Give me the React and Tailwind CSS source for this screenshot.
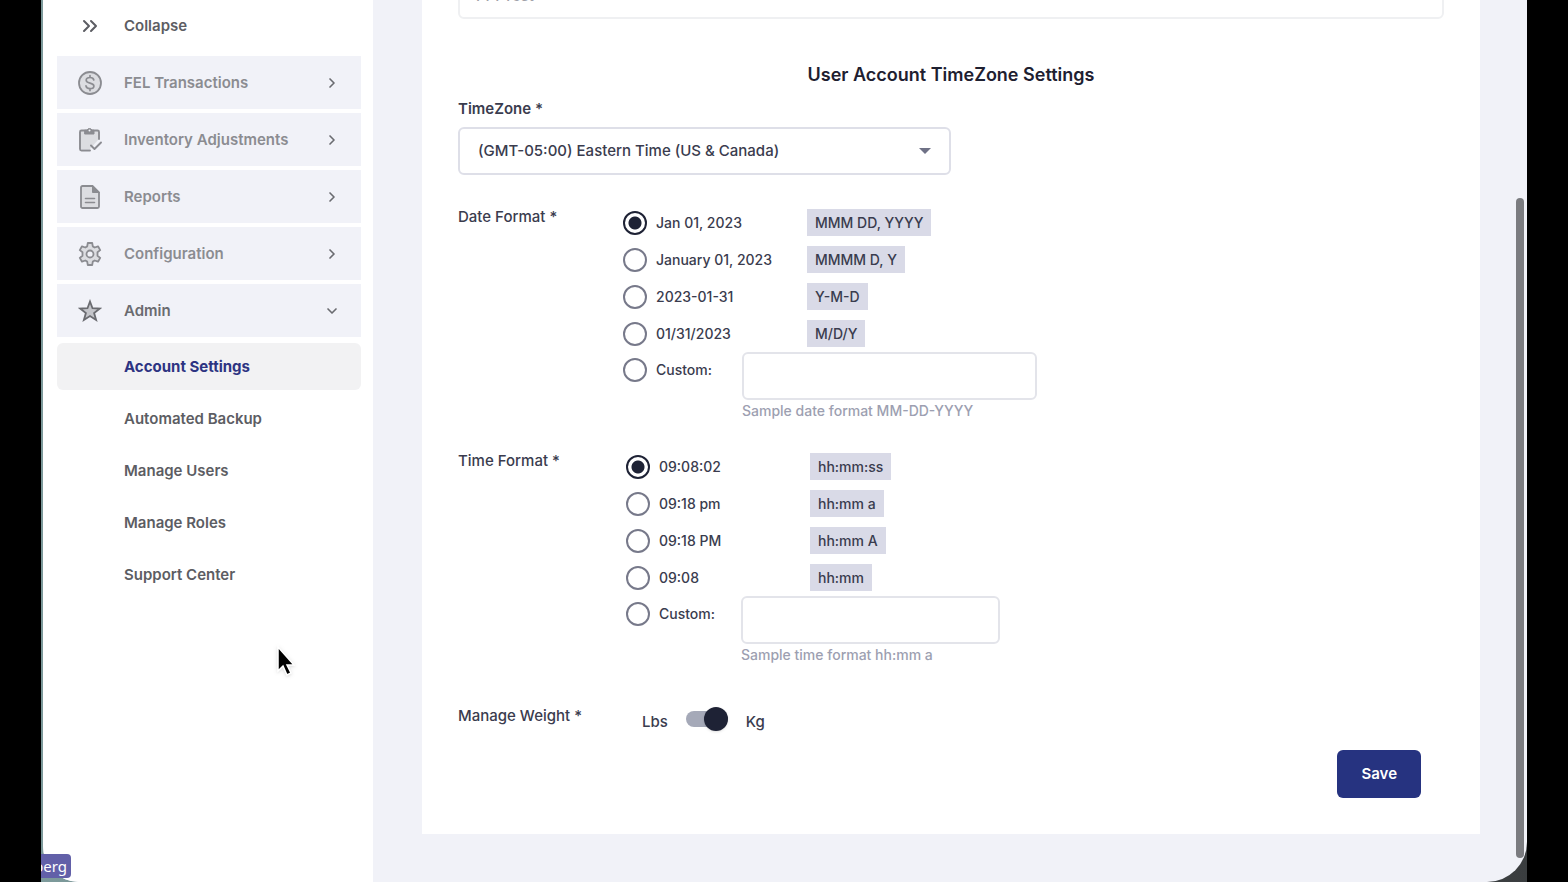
import React from "react";
import { ChevronDown, ChevronRight, ChevronsRight } from "lucide-react";

function DollarIcon() {
  return (
    <svg viewBox="0 0 24 24" className="size-6" fill="none" stroke="currentColor" strokeWidth="1.8" strokeLinecap="round">
      <circle cx="12" cy="12" r="11" fill="#dcdde1" />
      <path d="M15.8 9c-.3-1.6-1.800-2.500-3.800-2.500-2.200 0-3.800 1.100-3.800 2.700 0 3.900 7.700 1.800 7.700 5.700 0 1.700-1.700 2.700-3.900 2.700s-3.800-1-4-2.700M12 4.500v2M12 17.600v2" strokeWidth="1.7" />
    </svg>
  );
}

function ClipboardIcon() {
  return (
    <svg viewBox="0 0 24 24" className="size-6" fill="none" stroke="currentColor" strokeWidth="1.9" strokeLinecap="round" strokeLinejoin="round">
      <path d="M3 3h17v9l-8 9H3z" fill="#dcdde1" stroke="none" />
      <path d="M12 22.500H3.500A1.500 1.500 0 0 1 2 21V4a1.500 1.500 0 0 1 1.500-1.500h16A1.500 1.500 0 0 1 21 4v7" />
      <path d="M7 2.200h2.200a2.400 2.400 0 0 1 4.600 0H16V6H7z" fill="currentColor" strokeWidth="1" />
      <circle cx="11.500" cy="2.600" r="1" fill="#f1f2f8" stroke="none" />
      <path d="m13 17.500 3.500 3.500 6.500-6.500" />
    </svg>
  );
}

function ReportIcon() {
  return (
    <svg viewBox="0 0 24 24" className="size-6" fill="none" stroke="currentColor" strokeWidth="1.8" strokeLinecap="round" strokeLinejoin="round">
      <path d="M4.500 1h10L21 7.500v14a1.500 1.500 0 0 1-1.500 1.500h-15A1.500 1.500 0 0 1 3 21.500v-19A1.500 1.500 0 0 1 4.500 1z" fill="#dcdde1" />
      <path d="M14.500 1v6.500H21z" fill="currentColor" strokeWidth="1" />
      <path d="M7.500 13.500h9M7.500 17.500h9" strokeWidth="1.600" />
    </svg>
  );
}

function GearIcon() {
  return (
    <svg viewBox="0 0 24 24" className="size-6" fill="none" stroke="currentColor" strokeWidth="1.8" strokeLinejoin="round">
      <path
        d="M9.800 1h4.400l.6 3.400 1.900 1.100 3.300-1.200 2.200 3.800-2.700 2.200v3.400l2.700 2.200-2.200 3.800-3.300-1.200-1.900 1.100-.6 3.400H9.800l-.6-3.400-1.900-1.100L4 19.700l-2.200-3.800 2.700-2.200v-3.400L1.800 8.100 4 4.300l3.300 1.200 1.900-1.100z"
        fill="#dcdde1"
      />
      <circle cx="12" cy="12" r="3.500" fill="#f1f2f8" />
    </svg>
  );
}

function StarIcon() {
  return (
    <svg viewBox="0 0 24 24" className="size-6" fill="#c4c5ca" stroke="currentColor" strokeWidth="1.8">
      <path d="m12 2.500 2.500 6.700 7.300.3-5.700 4.500 2 7-6.100-4-6.100 4 2-7-5.700-4.500 7.300-.3z" />
    </svg>
  );
}

const menu = [
  { name: "FEL Transactions", icon: DollarIcon },
  { name: "Inventory Adjustments", icon: ClipboardIcon },
  { name: "Reports", icon: ReportIcon },
  { name: "Configuration", icon: GearIcon },
  { name: "Admin", icon: StarIcon, open: true },
];

const adminLinks = ["Account Settings", "Automated Backup", "Manage Users", "Manage Roles", "Support Center"];

const dateFormats = [
  { label: "Jan 01, 2023", code: "MMM DD, YYYY" },
  { label: "January 01, 2023", code: "MMMM D, Y" },
  { label: "2023-01-31", code: "Y-M-D" },
  { label: "01/31/2023", code: "M/D/Y" },
];

const timeFormats = [
  { label: "09:08:02", code: "hh:mm:ss" },
  { label: "09:18 pm", code: "hh:mm a" },
  { label: "09:18 PM", code: "hh:mm A" },
  { label: "09:08", code: "hh:mm" },
];

function Sidebar() {
  return (
    <aside className="w-[330px] shrink-0 bg-white pr-3 pl-3.5 font-semibold">
      <button type="button" className="flex h-[52px] w-full items-center pl-[21px] text-[#5c5d63]">
        <ChevronsRight className="size-6" strokeWidth={2} />
        <span className="ml-[22px]">Collapse</span>
      </button>
      <nav className="mt-1">
        <ul className="flex flex-col gap-1">
          {menu.map((item) => {
            const Icon = item.icon;
            const Chevron = item.open ? ChevronDown : ChevronRight;
            return (
              <li key={item.name}>
                <button
                  type="button"
                  aria-expanded={!!item.open}
                  className={
                    "flex h-[53px] w-full items-center bg-[#f1f2f8] px-[21px] " +
                    (item.open ? "text-[#6a6b70]" : "text-[#8b8c91]")
                  }
                >
                  <Icon />
                  <span className="ml-[22px] flex-1 text-left">{item.name}</span>
                  <Chevron className="size-4 text-[#6a6b70]" strokeWidth={2.5} />
                </button>
              </li>
            );
          })}
        </ul>
        <ul className="mt-1.5 flex flex-col gap-[5px]">
          {adminLinks.map((name, i) => (
            <li key={name}>
              <a
                href="#"
                className={
                  "flex h-[47px] items-center rounded-md pl-[67px] " +
                  (i === 0 ? "bg-[#f2f2f3] font-bold text-[#2d3482]" : "text-[#5c5d63]")
                }
              >
                {name}
              </a>
            </li>
          ))}
        </ul>
      </nav>
    </aside>
  );
}

function Radio({ name, label, defaultChecked }) {
  return (
    <label className="flex items-center gap-[9px]">
      <input
        type="radio"
        name={name}
        defaultChecked={defaultChecked}
        className="size-6 shrink-0 appearance-none rounded-full border-2 border-[#77798a] bg-white checked:border-[#1e2235] checked:bg-[radial-gradient(#1e2235_0_6px,#fff_7px)]"
      />
      {label}
    </label>
  );
}

function FormatGroup({ title, name, formats, hint, wide }) {
  return (
    <fieldset className="flex">
      <legend className="float-left w-[165px] leading-[26px]">{title}</legend>
      <div className={"flex-1 text-sm " + (wide ? "" : "pl-[3px]")}>
        {formats.map((f, i) => (
          <div key={f.code} className="flex h-[37px] items-center">
            <div className="w-[184px]">
              <Radio name={name} label={f.label} defaultChecked={i === 0} />
            </div>
            <code className="bg-[#d9dae7] px-2 font-[Inter] text-sm leading-[27px]">{f.code}</code>
          </div>
        ))}
        <div className="flex items-start">
          <div className={"pt-1.5 " + (wide ? "w-[119px]" : "w-[115px]")}>
            <Radio name={name} label="Custom:" />
          </div>
          <div>
            <input
              type="text"
              aria-label={title}
              className={"block h-12 rounded-md border-2 border-[#e3e4ea] bg-white px-4 " + (wide ? "w-[295px]" : "w-[259px]")}
            />
            <p className="leading-[22px] text-[#9d9fb1]">{hint}</p>
          </div>
        </div>
      </div>
    </fieldset>
  );
}

function Settings() {
  return (
    <main className="mr-[47px] mb-12 ml-[49px] flex-1 bg-white px-9 pb-9">
      <input
        type="text"
        aria-label="Name"
        defaultValue="PPI Test"
        className="-mt-[29px] block h-12 w-full rounded-md border-2 border-[#eff0f2] px-4 text-[#a0a1a8]"
      />
      <h2 className="mt-[42px] text-center text-lg font-semibold text-[#1e2030]">User Account TimeZone Settings</h2>
      <label htmlFor="timezone" className="mt-2 block font-semibold">
        TimeZone *
      </label>
      <div className="relative mt-1.5 w-1/2">
        <select id="timezone" className="h-12 w-full appearance-none rounded-md border-2 border-[#dedfe8] bg-white px-[18px]">
          <option>(GMT-05:00) Eastern Time (US &amp; Canada)</option>
        </select>
        <svg viewBox="0 0 12 6" className="pointer-events-none absolute top-[21px] right-5 h-1.5 w-3" fill="#6f7186">
          <path d="M0 0h12L6 6z" />
        </svg>
      </div>
      <div className="mt-[29px]">
        <FormatGroup title="Date Format *" name="date" formats={dateFormats} hint="Sample date format MM-DD-YYYY" wide />
      </div>
      <div className="mt-[26px]">
        <FormatGroup title="Time Format *" name="time" formats={timeFormats} hint="Sample time format hh:mm a" />
      </div>
      <div className="mt-[37px] flex leading-[26px]">
        <span className="w-[184px]">Manage Weight *</span>
        <label className="flex items-center pt-1.5">
          Lbs
          <input
            type="checkbox"
            role="switch"
            defaultChecked
            className="relative mx-[18px] mb-1.5 h-4 w-[42px] appearance-none rounded-full bg-[#a5a9b8] before:absolute before:-top-1 before:left-0 before:size-6 before:rounded-full before:bg-[#1e2235] before:shadow checked:before:left-[18px]"
          />
          Kg
        </label>
      </div>
      <div className="mt-[15px] flex justify-end pr-[23px]">
        <button type="button" className="h-12 rounded-md bg-[#263380] px-6 font-semibold text-white">
          Save
        </button>
      </div>
    </main>
  );
}

export default function App() {
  return (
    <div className="bg-black px-[41px] font-[Inter,sans-serif] text-[15px] leading-6 font-medium text-[#3a3c4e]">
      <div className="relative bg-linear-to-r from-[#7d9a9b] to-[#3a3d3f] pl-0.5">
        <div className="flex min-h-screen items-stretch overflow-hidden rounded-br-[40px] rounded-bl-[36px] bg-[#f1f2f8]">
          <Sidebar />
          <Settings />
        </div>
        <div className="absolute top-[198px] right-[3px] bottom-6 w-2 rounded-full bg-[#7b7c80]" />
        <div className="absolute bottom-1 left-0 flex w-[30px] justify-end overflow-hidden rounded-r bg-[#6260a8] pr-1 font-['Noto_Sans'] font-normal text-white">
          berg
        </div>
        <svg viewBox="0 0 20 32" className="absolute top-[645px] left-[235px] h-8 w-5 drop-shadow">
          <path d="M2 2v24l5-5 4 9 4-2-4-8h7z" fill="#000" stroke="#fff" strokeWidth="1.500" />
        </svg>
      </div>
    </div>
  );
}
